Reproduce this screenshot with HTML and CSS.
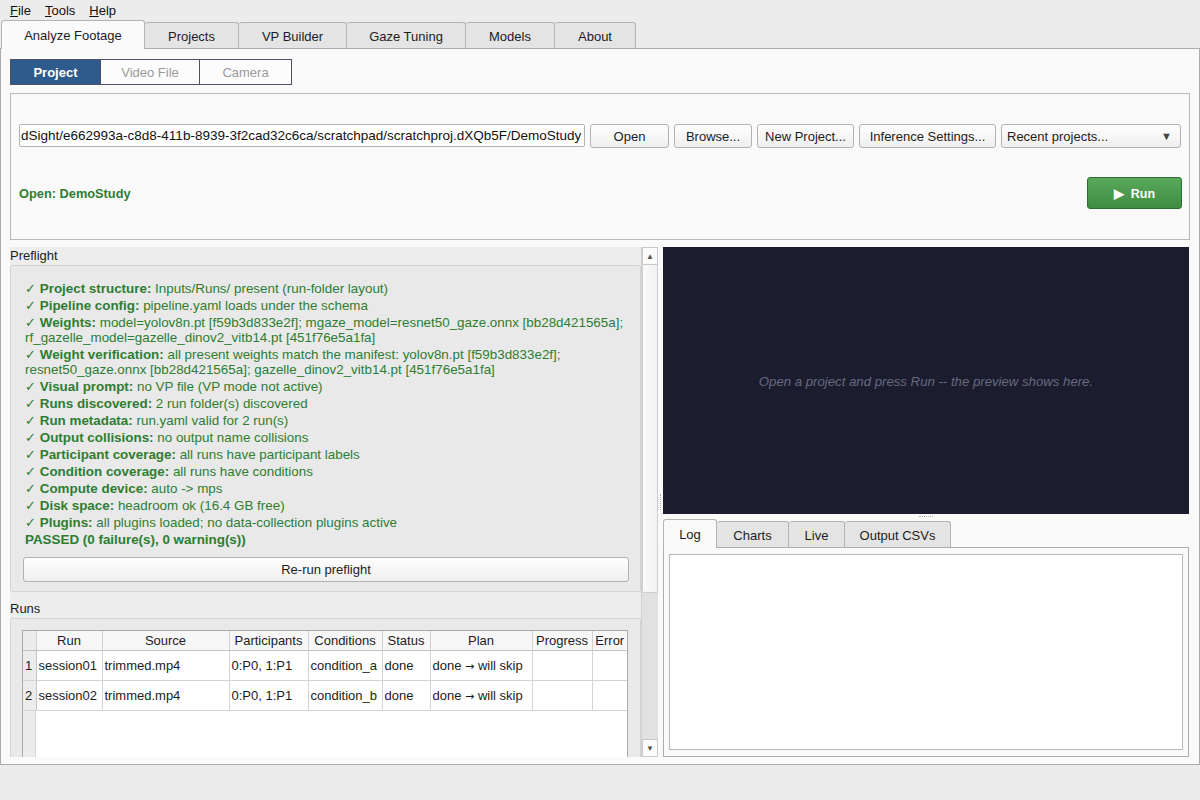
FILE: index.html
```html
<!DOCTYPE html>
<html>
<head>
<meta charset="utf-8">
<link rel="stylesheet" href="styles.css">
</head>
<body>
<div class="menubar">
  <span><u>F</u>ile</span>
  <span><u>T</u>ools</span>
  <span><u>H</u>elp</span>
</div>
<div class="tabbar">
  <div class="tab sel w-af">Analyze Footage</div>
  <div class="tab w-pr">Projects</div>
  <div class="tab w-vp">VP Builder</div>
  <div class="tab w-gt">Gaze Tuning</div>
  <div class="tab w-mo">Models</div>
  <div class="tab w-ab">About</div>
</div>
<div class="pane">
  <div class="seg">
    <div class="segbtn on w-s1">Project</div>
    <div class="segbtn w-s2">Video File</div>
    <div class="segbtn w-s3">Camera</div>
  </div>
  <div class="projbox">
    <div class="row1">
      <div class="path">dSight/e662993a-c8d8-411b-8939-3f2cad32c6ca/scratchpad/scratchproj.dXQb5F/DemoStudy</div>
      <div class="btn b-open">Open</div>
      <div class="btn b-browse">Browse...</div>
      <div class="btn b-new">New Project...</div>
      <div class="btn b-inf">Inference Settings...</div>
      <div class="btn combo"><span>Recent projects...</span><span class="caret">▼</span></div>
    </div>
    <div class="row2">
      <div class="openlbl">Open: DemoStudy</div>
      <div class="runbtn">▶&nbsp;&nbsp;Run</div>
    </div>
  </div>
  <div class="main">
    <div class="left">
      <div class="scroll">
        <div class="grplbl">Preflight</div>
        <div class="grp pre">
          <div class="checks">
            <p>✓ <b>Project structure:</b> Inputs/Runs/ present (run-folder layout)</p>
            <p>✓ <b>Pipeline config:</b> pipeline.yaml loads under the schema</p>
            <p>✓ <b>Weights:</b> model=yolov8n.pt [f59b3d833e2f]; mgaze_model=resnet50_gaze.onnx [bb28d421565a];<br>rf_gazelle_model=gazelle_dinov2_vitb14.pt [451f76e5a1fa]</p>
            <p>✓ <b>Weight verification:</b> all present weights match the manifest: yolov8n.pt [f59b3d833e2f];<br>resnet50_gaze.onnx [bb28d421565a]; gazelle_dinov2_vitb14.pt [451f76e5a1fa]</p>
            <p>✓ <b>Visual prompt:</b> no VP file (VP mode not active)</p>
            <p>✓ <b>Runs discovered:</b> 2 run folder(s) discovered</p>
            <p>✓ <b>Run metadata:</b> run.yaml valid for 2 run(s)</p>
            <p>✓ <b>Output collisions:</b> no output name collisions</p>
            <p>✓ <b>Participant coverage:</b> all runs have participant labels</p>
            <p>✓ <b>Condition coverage:</b> all runs have conditions</p>
            <p>✓ <b>Compute device:</b> auto -&gt; mps</p>
            <p>✓ <b>Disk space:</b> headroom ok (16.4 GB free)</p>
            <p>✓ <b>Plugins:</b> all plugins loaded; no data-collection plugins active</p>
            <p><b>PASSED (0 failure(s), 0 warning(s))</b></p>
          </div>
          <div class="btn rerun">Re-run preflight</div>
        </div>
        <div class="grplbl runslbl">Runs</div>
        <div class="grp runs">
          <div class="tablewrap">
            <table>
              <colgroup>
                <col class="c0"><col class="c1"><col class="c2"><col class="c3"><col class="c4"><col class="c5"><col class="c6"><col class="c7"><col class="c8">
              </colgroup>
              <thead>
                <tr><th class="rn"></th><th>Run</th><th>Source</th><th>Participants</th><th>Conditions</th><th>Status</th><th>Plan</th><th>Progress</th><th>Error</th></tr>
              </thead>
              <tbody>
                <tr><td class="rn">1</td><td>session01</td><td>trimmed.mp4</td><td>0:P0, 1:P1</td><td>condition_a</td><td>done</td><td>done <span class="arr">→</span> will skip</td><td></td><td></td></tr>
                <tr><td class="rn">2</td><td>session02</td><td>trimmed.mp4</td><td>0:P0, 1:P1</td><td>condition_b</td><td>done</td><td>done <span class="arr">→</span> will skip</td><td></td><td></td></tr>
              </tbody>
            </table>
          </div>
        </div>
      </div>
      <div class="vscroll">
        <div class="arrow up">▲</div>
        <div class="thumb"></div>
        <div class="track"></div>
        <div class="arrow down">▼</div>
      </div>
    </div>
    <div class="vsplit"><div class="vdots"></div></div>
    <div class="right">
      <div class="preview">Open a project and press Run -- the preview shows here.</div>
      <div class="hsplit"><div class="hdots"></div></div>
      <div class="rtabbar">
        <div class="tab sel w-log">Log</div>
        <div class="tab w-ch">Charts</div>
        <div class="tab w-li">Live</div>
        <div class="tab w-oc">Output CSVs</div>
      </div>
      <div class="rpane">
        <div class="logbox"></div>
      </div>
    </div>
  </div>
</div>
</body>
</html>
```

FILE: styles.css
```css
* { box-sizing: border-box; }
html, body { margin: 0; }
body {
  width: 1200px;
  height: 800px;
  overflow: hidden;
  background: #ececec;
  font-family: "Liberation Sans", Arial, sans-serif;
  font-size: 13px;
  color: #1c1c1c;
}

/* menu */
.menubar {
  height: 20px;
  display: flex;
  align-items: center;
  gap: 14px;
  padding-left: 10px;
  color: #111;
}

/* tabs */
.tabbar {
  height: 28px;
  display: flex;
  align-items: flex-end;
  padding-left: 1px;
}
.tab {
  height: 26px;
  display: flex;
  align-items: center;
  justify-content: center;
  padding-top: 1px;
  background: #e4e4e4;
  border: 1px solid #b4b4b4;
  border-bottom: none;
  border-left: none;
  border-radius: 3px 3px 0 0;
  color: #1c1c1c;
}
.tab.sel {
  height: 29px;
  margin-bottom: -1px;
  background: #fafafa;
  border-left: 1px solid #b4b4b4;
  position: relative;
  z-index: 2;
}
.w-af { width: 144px; }
.w-pr { width: 94px; }
.w-vp { width: 108px; }
.w-gt { width: 119px; }
.w-mo { width: 89px; }
.w-ab { width: 81px; }

.pane {
  height: 717px;
  background: #fafafa;
  border: 1px solid #adadad;
  padding: 10px 9px 7px 9px;
}

/* segmented */
.seg {
  display: flex;
  height: 26px;
}
.segbtn {
  height: 26px;
  display: flex;
  align-items: center;
  justify-content: center;
  border: 1.5px solid #4c5263;
  margin-left: -1.5px;
  color: #9a9a9a;
  background: #fcfcfc;
}
.segbtn:first-child { margin-left: 0; }
.segbtn.on {
  background: #2d5b8c;
  color: #ffffff;
  font-weight: bold;
}
.w-s1 { width: 91px; }
.w-s2 { width: 101px; }
.w-s3 { width: 93px; }

/* project box */
.projbox {
  margin-top: 8px;
  height: 147px;
  border: 1px solid #bababa;
  background: #fafafa;
  padding: 30px 8px 0 8px;
}
.row1 {
  display: flex;
  gap: 5px;
  height: 24px;
}
.path {
  width: 566px;
  height: 23px;
  background: #fff;
  border: 1px solid #b3b3b3;
  border-radius: 2px;
  padding: 0 1px;
  line-height: 21px;
  white-space: nowrap;
  overflow: hidden;
  color: #111;
  font-size: 13.5px;
}
.btn {
  height: 24px;
  display: flex;
  align-items: center;
  justify-content: center;
  border: 1px solid #b3b3b3;
  border-radius: 3px;
  background: linear-gradient(#fefefe, #efefef);
  color: #1c1c1c;
  white-space: nowrap;
}
.b-open { width: 79px; }
.b-browse { width: 78px; }
.b-new { width: 97px; }
.b-inf { width: 137px; }
.combo {
  width: 180px;
  justify-content: space-between;
  padding: 0 8px 0 5px;
}
.caret { font-size: 11px; color: #444; }

.row2 {
  margin-top: 29px;
  height: 32px;
  display: flex;
  align-items: center;
  justify-content: space-between;
}
.openlbl {
  color: #2e7d32;
  font-weight: bold;
  font-size: 12.8px;
  padding-top: 1px;
}
.runbtn {
  width: 95px;
  height: 32px;
  display: flex;
  align-items: center;
  justify-content: center;
  border: 1px solid #2f6e31;
  border-radius: 3px;
  background: linear-gradient(#5aa85a, #3f8d41);
  color: #fff;
  font-weight: bold;
  font-size: 12.5px;
  margin-right: -1px;
}

/* main split */
.main {
  margin-top: 7px;
  height: 510px;
  display: flex;
}
.left {
  width: 648px;
  height: 510px;
  display: flex;
  background: #ededed;
}
.scroll {
  width: 631px;
  height: 510px;
  overflow: hidden;
}
.grplbl {
  height: 18px;
  line-height: 18px;
  padding-left: 0;
  color: #1c1c1c;
}
.runslbl {
  margin-top: 8px;
}
.grp {
  border: 1px solid #d3d3d3;
  background: #e9e9e9;
  border-radius: 2px;
}
.pre {
  height: 327px;
  padding: 15px 12px 0 12px;
}
.checks {
  padding-left: 2px;
  color: #2e7d32;
  font-size: 13.4px;
}
.checks p {
  margin: 0 0 2px 0;
  line-height: 15px;
  white-space: nowrap;
}
.rerun {
  margin-top: 10px;
  height: 25px;
  width: 606px;
}
.runs {
  height: 160px;
  padding: 11px 12px 0 11px;
}
.tablewrap {
  width: 606px;
  height: 150px;
  border: 1px solid #a9a9a9;
  background: linear-gradient(to right, #ececec 12px, #d4d4d4 12px, #d4d4d4 13px, #ffffff 13px);
  overflow: hidden;
}
table {
  border-collapse: collapse;
  table-layout: fixed;
  width: 604px;
}
.c0 { width: 13px; }
.c1 { width: 66px; }
.c2 { width: 127px; }
.c3 { width: 79px; }
.c4 { width: 74px; }
.c5 { width: 48px; }
.c6 { width: 102px; }
.c7 { width: 60px; }
.c8 { width: 35px; }
th {
  height: 19px;
  font-weight: normal;
  background: #f7f7f7;
  border-right: 1px solid #d0d0d0;
  border-bottom: 1px solid #c4c4c4;
  padding: 0;
  text-align: center;
  white-space: nowrap;
  overflow: hidden;
}
td {
  height: 30px;
  background: #fff;
  border-right: 1px solid #d4d4d4;
  border-bottom: 1px solid #d4d4d4;
  padding: 0 2px;
  white-space: nowrap;
  overflow: hidden;
}
.arr { font-family: "DejaVu Sans", sans-serif; font-size: 11px; }
th:last-child, td:last-child { border-right: none; }
td.rn {
  background: #ececec;
  padding: 0 0 0 2px;
  border-right: 1px solid #c4c4c4;
}
th.rn { background: #ececec; }

/* scrollbar */
.vscroll {
  width: 17px;
  height: 510px;
  display: flex;
  flex-direction: column;
  border-left: 1px solid #d0d0d0;
  background: #e2e2e2;
}
.arrow {
  height: 18px;
  background: #fbfbfb;
  border: 1px solid #c9c9c9;
  font-size: 8px;
  color: #555;
  display: flex;
  align-items: center;
  justify-content: center;
}
.thumb {
  height: 328px;
  background: linear-gradient(to right, #fafafa, #f1f1f1);
  border: 1px solid #cfcfcf;
  border-top: none;
}
.track {
  flex: 1;
  background: #e1e1e1;
}

/* splitters */
.vsplit {
  width: 5px;
  display: flex;
  align-items: center;
  justify-content: center;
}
.vdots {
  height: 16px;
  border-left: 1px dotted #b0b0b0;
}
.hsplit {
  height: 5px;
  display: flex;
  align-items: center;
  justify-content: center;
}
.hdots {
  width: 14px;
  border-top: 1px dotted #b0b0b0;
}

/* right */
.right {
  width: 526px;
  height: 510px;
  display: flex;
  flex-direction: column;
}
.preview {
  height: 267px;
  background: #1b1c2e;
  color: #676a80;
  font-style: italic;
  font-size: 13.2px;
  display: flex;
  align-items: center;
  justify-content: center;
  padding-top: 1px;
}
.rtabbar {
  height: 28px;
  display: flex;
  align-items: flex-end;
}
.w-log { width: 54px; }
.w-ch { width: 72px; }
.w-li { width: 56px; }
.w-oc { width: 106px; }
.rpane {
  flex: 1;
  border: 1px solid #adadad;
  background: #fafafa;
  padding: 6px 5px;
}
.logbox {
  height: 100%;
  background: #fff;
  border: 1px solid #b8b8b8;
}
```
